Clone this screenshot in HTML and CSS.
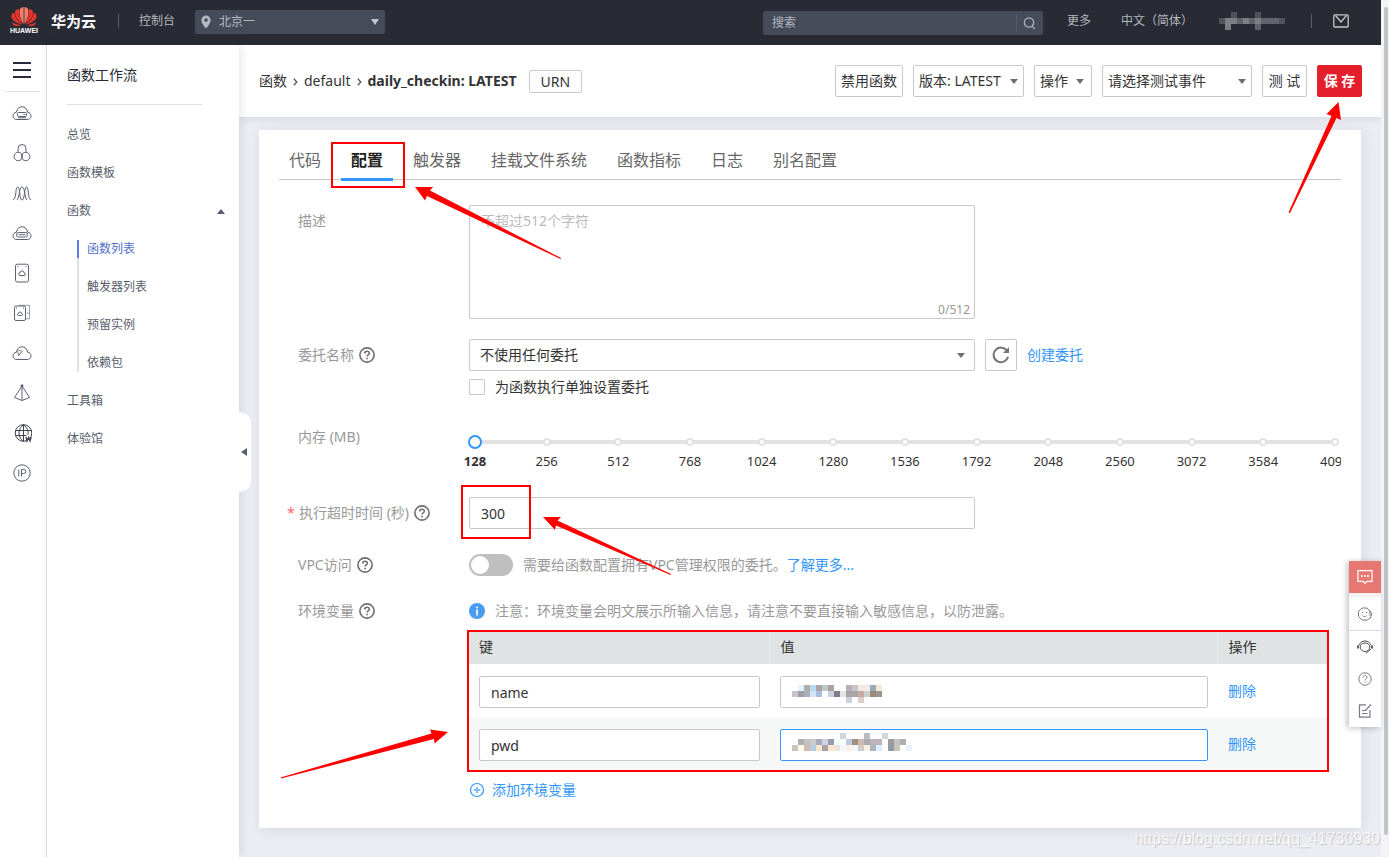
FILE: index.html
```html
<!DOCTYPE html>
<html lang="zh-CN">
<head>
<meta charset="utf-8">
<title>函数工作流 - 华为云</title>
<link rel="stylesheet" href="styles.css">
</head>
<body>
<svg class="defs" aria-hidden="true">
  <symbol id="help" viewBox="0 0 16 16"><circle cx="8" cy="8" r="7.1" fill="none" stroke="#6e6e6e" stroke-width="1.6"/><path d="M5.7 6.5C5.7 5 6.7 4.2 8 4.2s2.3.8 2.3 2.1c0 1.6-2.2 1.7-2.2 3.3" fill="none" stroke="#6e6e6e" stroke-width="1.5"/><path d="M7.2 10.7h1.7v1.6H7.2z" fill="#6e6e6e"/></symbol>
  <symbol id="cloud" viewBox="0 0 20 20"><path d="M5 16.5C2.500 16.500 1 15 1 12.800 1 11 2.300 9.300 4.500 9.200 5 5.800 7 3.800 10 3.800s5 2 5.500 5.400c2.200.1 3.500 1.800 3.500 3.600 0 2.200-1.500 3.700-4 3.700z"/></symbol>
</svg>
<div class="window">
  <div class="app">
    <header class="header">
      <a class="brand" href="#">
        <span class="logo">
          <svg width="26" height="20" viewBox="0 0 26 20">
            <g id="petals" fill="#e8332c">
              <path fill="#f0806a" d="M12.600 17C9.500 12.500 8 6.500 8.700 3 9.100 1 10.800.1 12.600.1z"/>
              <path d="M11.900 17.200C6.500 13.500 3.400 8.500 4 5 4.300 3.200 6 2 8 2 7.700 7.500 9.500 13 11.900 17.200z"/>
              <path d="M11.200 17.600C5 16.300.9 12.800.3 9.800.1 8 1.100 6.300 3.100 5.400 4 10.500 7.200 14.700 11.200 17.600z"/>
              <path d="M10.600 18.100c-3.400 1.300-6.400 1.300-7.900.2-1-.8-1.500-1.700-1.700-3.100C3.800 16.900 7 17.800 10.600 18.100z"/>
            </g>
            <use href="#petals" transform="translate(26 0) scale(-1 1)"/>
          </svg>
          <span class="logo-word">HUAWEI</span>
        </span>
        <strong class="brand-name">华为云</strong>
      </a>
      <span class="divider"></span>
      <a class="console" href="#">控制台</a>
      <div class="region">
        <svg width="10" height="14" viewBox="0 0 10 14"><path fill="#b4b7bf" fill-rule="evenodd" d="M5 .5a4.700 4.700 0 0 1 4.700 4.700C9.700 8.500 5 13.500 5 13.500S.3 8.500.3 5.200A4.700 4.700 0 0 1 5 .5zm0 2.800a1.800 1.800 0 1 0 0 3.600 1.800 1.800 0 0 0 0-3.600z"/></svg>
        <select aria-label="区域"><option>北京一</option></select>
      </div>
      <form class="search">
        <input type="text" placeholder="搜索" aria-label="搜索">
        <button type="button" aria-label="搜索"><svg width="13" height="13" viewBox="0 0 13 13" fill="none" stroke="#b4b7bf" stroke-width="1.200"><circle cx="6" cy="5.500" r="4.700"/><path d="M9 9.200l3 3"/></svg></button>
      </form>
      <a class="more" href="#">更多</a>
      <a class="lang" href="#">中文（简体）</a>
      <svg class="account" width="66" height="18" viewBox="0 0 66 18"><path fill="#50535b" d="M0 6h6v6H0zM12 0h6v6h-6zM36 0h6v6h-6zM60 6h6v6h-6z"/><path fill="#7c7f86" d="M6 6h6v12H6zM12 6h6v6h-6zM24 6h6v6h-6zM36 6h6v6h-6z"/><path fill="#61646c" d="M18 6h6v6h-6zM30 6h6v6h-6zM36 12h6v6h-6zM42 6h18v6H42z"/></svg>
      <span class="divider"></span>
      <button class="mail" type="button" aria-label="消息"><svg width="16" height="14" viewBox="0 0 16 14" fill="none" stroke="#c4c6cc" stroke-width="1.300"><rect x=".8" y=".8" width="14.400" height="12.200" rx="1"/><path d="M2.500 1.500L8 8l5.500-6.500"/></svg></button>
    </header>

    <div class="body">
      <nav class="rail" aria-label="服务">
        <button class="menu" type="button" aria-label="菜单"><span></span><span></span><span></span></button>
        <ul>
          <li><svg viewBox="0 0 20 20"><use href="#cloud"/><rect x="5.500" y="9.500" width="9" height="4" rx="1"/><path d="M11.500 11.500h1.500M6 14.800h8"/></svg></li>
          <li><svg viewBox="0 0 20 20"><circle cx="6.300" cy="13.500" r="4.200"/><circle cx="13.700" cy="13.500" r="4.200"/><path d="M6 9.300V5.500a4 4 0 0 1 8 0v3.800M10 11v2"/></svg></li>
          <li><svg viewBox="0 0 20 20"><path d="M1 17c4-2 2-13 4.700-13S7 17 10 17s2-13 4.500-13S15.500 16 19 17M5 17C7.500 15 7 4 10 4s2.500 11 5 13"/></svg></li>
          <li><svg viewBox="0 0 20 20"><use href="#cloud"/><rect x="4.500" y="9.500" width="11" height="4.500" rx="2"/><path d="M6.500 11.700h7"/></svg></li>
          <li><svg viewBox="0 0 20 20"><rect x="3.500" y="1.200" width="13" height="17.800" rx="1.800"/><path d="M5.500 3.500h1M13.500 3.500h1M8 12.500a1.300 1.300 0 0 1 0-2.600 2 2 0 0 1 4 0 1.300 1.300 0 0 1 0 2.600z"/></svg></li>
          <li><svg viewBox="0 0 20 20"><rect x="2.500" y="3" width="11" height="14.500" rx="1.500"/><path stroke-opacity=".6" d="M7 2.300h10.500v13.500H14M16 9v2"/><path d="M4 5h1M11 5h1M6.500 12.500a1 1 0 0 1 0-2 1.500 1.500 0 0 1 3 0 1 1 0 0 1 0 2z"/></svg></li>
          <li><svg viewBox="0 0 20 20"><use href="#cloud"/><path stroke-opacity=".7" d="M5.500 7.500l1.200 5L10.500 8l-4-.5M6.700 12.500l2-3"/></svg></li>
          <li><svg viewBox="0 0 20 20"><path d="M10 3L2.500 14.500 10 17.500l7.500-3zM10 3v14.500"/><circle cx="10" cy="2.800" r="1" fill="#3d4152"/></svg></li>
          <li><svg class="dark" viewBox="0 0 20 20"><circle cx="11.500" cy="10" r="8.300"/><path d="M11.500 1.700v16.600M3.500 7.500h16M3.500 12.500h11M11.500 1.700c-6 4-6 12.600 0 16.600M11.500 1.700c4 3 5 7 4.500 10"/><path stroke-width="1.300" d="M14 14l1 4 1.500-3.500L18 18l1.200-4"/></svg></li>
          <li><svg viewBox="0 0 20 20"><circle cx="10" cy="10" r="8.200"/><path d="M6.800 6.500v7M9.500 13.500v-7h2.300a2 2 0 0 1 0 4H9.500"/></svg></li>
        </ul>
      </nav>

      <nav class="side" aria-label="函数工作流">
        <h2>函数工作流</h2>
        <ul>
          <li><a href="#">总览</a></li>
          <li><a href="#">函数模板</a></li>
          <li><a class="open" href="#">函数</a>
            <ul class="sub">
              <li class="current"><a href="#">函数列表</a></li>
              <li><a href="#">触发器列表</a></li>
              <li><a href="#">预留实例</a></li>
              <li><a href="#">依赖包</a></li>
            </ul>
          </li>
          <li><a href="#">工具箱</a></li>
          <li><a href="#">体验馆</a></li>
        </ul>
        <button class="collapse" type="button" aria-label="收起"></button>
      </nav>

      <main class="main">
        <div class="topbar">
          <div class="crumbs">
            <a href="#">函数</a><svg width="5" height="8" viewBox="0 0 5 8"><path d="M.8.800l3 3.200-3 3.200"/></svg><a href="#">default</a><svg width="5" height="8" viewBox="0 0 5 8"><path d="M.8.800l3 3.200-3 3.200"/></svg><strong>daily_checkin: LATEST</strong>
            <button class="urn" type="button">URN</button>
          </div>
          <div class="actions">
            <button class="btn" type="button">禁用函数</button>
            <div class="drop version"><select aria-label="版本"><option>版本: LATEST</option></select></div>
            <button class="btn ops" type="button">操作</button>
            <div class="drop event"><select aria-label="测试事件"><option>请选择测试事件</option></select></div>
            <button class="btn short" type="button">测 试</button>
            <button class="btn short save" type="button">保 存</button>
          </div>
        </div>

        <section class="card">
          <ul class="tabs">
            <li><a href="#">代码</a></li>
            <li class="active"><a href="#">配置</a><span class="mark mark-tab"></span></li>
            <li><a href="#">触发器</a></li>
            <li><a href="#">挂载文件系统</a></li>
            <li><a href="#">函数指标</a></li>
            <li><a href="#">日志</a></li>
            <li><a href="#">别名配置</a></li>
          </ul>

          <form class="form">
            <div class="field">
              <label for="desc">描述</label>
              <div class="area">
                <textarea id="desc" placeholder="不超过512个字符"></textarea>
                <span class="count">0/512</span>
              </div>
            </div>

            <div class="field agency">
              <label for="agency">委托名称<svg class="help"><use href="#help"/></svg></label>
              <div>
                <div class="line">
                  <div class="drop wide"><select id="agency"><option>不使用任何委托</option></select></div>
                  <button class="refresh" type="button" aria-label="刷新"><svg width="18" height="18" viewBox="0 0 18 18"><path d="M15.300 5.300A7.300 7.300 0 1 0 16 10.800" fill="none" stroke="#757575" stroke-width="2"/><path fill="#757575" d="M17 1v6h-6z"/></svg></button>
                  <a class="link" href="#">创建委托</a>
                </div>
                <div class="check"><input id="own" type="checkbox"><label for="own">为函数执行单独设置委托</label></div>
              </div>
            </div>

            <div class="field memory">
              <label for="mem">内存 (MB)</label>
              <div class="slider">
                <div class="ticks"><i></i><i></i><i></i><i></i><i></i><i></i><i></i><i></i><i></i><i></i><i></i><i></i><i></i></div>
                <input id="mem" type="range" min="0" max="12" value="0">
                <div class="scale"><b>128</b><span>256</span><span>512</span><span>768</span><span>1024</span><span>1280</span><span>1536</span><span>1792</span><span>2048</span><span>2560</span><span>3072</span><span>3584</span><span>4096</span></div>
              </div>
            </div>

            <div class="field timeout">
              <label class="required" for="timeout">执行超时时间 (秒)<svg class="help"><use href="#help"/></svg></label>
              <div class="box">
                <input id="timeout" class="text" type="text" value="300">
                <span class="mark mark-timeout"></span>
              </div>
            </div>

            <div class="field vpc">
              <label for="vpc">VPC访问<svg class="help"><use href="#help"/></svg></label>
              <div class="line">
                <input id="vpc" class="switch" type="checkbox">
                <p class="note">需要给函数配置拥有VPC管理权限的委托。<a class="link" href="#">了解更多...</a></p>
              </div>
            </div>

            <div class="field env">
              <span class="name">环境变量<svg class="help"><use href="#help"/></svg></span>
              <div>
                <p class="note info"><svg width="16" height="16" viewBox="0 0 16 16"><circle cx="8" cy="8" r="8" fill="#4a9cf0"/><path fill="#fff" d="M7.200 3.500h1.700v1.700H7.200zM7.200 6.500h1.700v6H7.200z"/></svg>注意：环境变量会明文展示所输入信息，请注意不要直接输入敏感信息，以防泄露。</p>
                <div class="vars">
                  <table>
                    <thead><tr><th class="key">键</th><th>值</th><th class="op">操作</th></tr></thead>
                    <tbody>
                      <tr>
                        <td><input class="text" type="text" value="name" aria-label="键"></td>
                        <td><div class="box"><input class="text" type="text" aria-label="值">
                          <svg class="mosaic" width="120" height="18" viewBox="0 0 20 3" shape-rendering="crispEdges" stroke-width="1" fill="none">
                            <path stroke="#def4ff" d="M1 .5h1"/><path stroke="#b0aea9" d="M2 .5h1"/><path stroke="#b8d8f0" d="M3 .5h1"/><path stroke="#aba4a0" d="M4 .5h1M6 .5h1"/><path stroke="#bfc8ca" d="M5 .5h1"/><path stroke="#b6b2bb" d="M9 .5h1"/><path stroke="#c8c4c0" d="M10 .5h1"/><path stroke="#f3e9e4" d="M11 .5h2"/><path stroke="#9aa8b8" d="M13 .5h1"/><path stroke="#f1e9d2" d="M14 .5h1"/>
                            <path stroke="#c9c3cb" d="M0 1.500h1"/><path stroke="#a09faa" d="M1 1.500h1"/><path stroke="#aeadbb" d="M2 1.500h1"/><path stroke="#cfe6f8" d="M3 1.500h1"/><path stroke="#a8bedb" d="M4 1.500h1"/><path stroke="#cbd2df" d="M6 1.500h1M9 2.500h1"/><path stroke="#827d88" d="M7 1.500h1"/><path stroke="#e4e6e4" d="M8 1.500h1"/><path stroke="#aaa3a8" d="M9 1.500h2"/><path stroke="#c8aa9e" d="M11 1.500h1"/><path stroke="#c5d3cb" d="M12 1.500h1"/><path stroke="#9e887d" d="M13 1.500h1"/><path stroke="#9c9593" d="M14 1.500h1"/><path stroke="#d9d0cc" d="M11 2.500h1"/>
                          </svg></div></td>
                        <td class="op"><a class="link" href="#">删除</a></td>
                      </tr>
                      <tr>
                        <td><input class="text" type="text" value="pwd" aria-label="键"></td>
                        <td><div class="box"><input class="text focused" type="text" aria-label="值">
                          <svg class="mosaic high" width="120" height="18" viewBox="0 0 20 3" shape-rendering="crispEdges" stroke-width="1" fill="none">
                            <path stroke="#ced7de" d="M8 .5h1M15 .5h1"/><path stroke="#bcbcc3" d="M12 .5h1"/>
                            <path stroke="#b0b0ad" d="M1 1.500h1M18 1.500h1"/><path stroke="#c5c1c7" d="M2 1.500h1M17 1.500h1"/><path stroke="#cdcbc5" d="M3 1.500h1"/><path stroke="#a5abb9" d="M4 1.500h1"/><path stroke="#ccd5e2" d="M5 1.500h1"/><path stroke="#9c9aad" d="M6 1.500h1"/><path stroke="#f0ffff" d="M7 1.500h1"/><path stroke="#b8c9e4" d="M9 1.500h1"/><path stroke="#a78e78" d="M10 1.500h1"/><path stroke="#cbbcb4" d="M11 1.500h1"/><path stroke="#aaabad" d="M12 1.500h1"/><path stroke="#bdb3ba" d="M13 1.500h2"/><path stroke="#9b9d98" d="M16 1.500h1"/>
                            <path stroke="#cac4bb" d="M0 2.500h1M17 2.500h1"/><path stroke="#fffdf0" d="M1 2.500h1"/><path stroke="#d8b8aa" d="M2 2.500h1"/><path stroke="#b2cfe4" d="M3 2.500h1"/><path stroke="#fce5cd" d="M4 2.500h1M6 2.500h1"/><path stroke="#a8a2ac" d="M5 2.500h1"/><path stroke="#ece3df" d="M7 2.500h1"/><path stroke="#eff7ff" d="M8 2.500h1M10 2.500h1"/><path stroke="#f9efe3" d="M9 2.500h1M12 2.500h1"/><path stroke="#d4ccc6" d="M11 2.500h1"/><path stroke="#adb4bb" d="M13 2.500h1"/><path stroke="#dcefff" d="M14 2.500h1"/><path stroke="#919ba5" d="M16 2.500h1"/><path stroke="#e8f3fa" d="M19 2.500h1"/>
                          </svg></div></td>
                        <td class="op"><a class="link" href="#">删除</a></td>
                      </tr>
                    </tbody>
                  </table>
                  <span class="mark mark-vars"></span>
                </div>
                <button class="add" type="button"><svg width="16" height="16" viewBox="0 0 16 16" fill="none" stroke="#3296fa"><circle cx="8" cy="8" r="6.500" stroke-width="1.200"/><path stroke="#7fbdfb" stroke-width="2" d="M8 4.700v6.600M4.700 8h6.600"/></svg>添加环境变量</button>
              </div>
            </div>
          </form>
        </section>
      </main>
    </div>
  </div>
  <div class="scrollbar"><span></span></div>
</div>

<aside class="dock">
  <button class="feedback" type="button" aria-label="反馈"><svg width="16" height="16" viewBox="0 0 16 16" fill="none" stroke="#fff" stroke-width="1.200"><path d="M1 1.700h14v10.600H10L8 14.300 6 12.300H1z"/><path stroke-width="1.500" d="M4 7h2M7 7h2M10 7h2"/></svg></button>
  <div class="tools">
    <button type="button" aria-label="智能客服"><svg width="16" height="16" viewBox="0 0 16 16" fill="none" stroke="#777b86"><path d="M12 12.700L10.500 14H5L1.500 10.500v-5L5 2h5l3 3v5M12 12.700h1L15 8l-2-3"/><path d="M5.500 9.500c1 1.500 3 1.500 4 0M5 6.500h1.200M9 6.500h1.200"/></svg></button>
    <button type="button" aria-label="在线客服"><svg width="16" height="16" viewBox="0 0 16 16" fill="none" stroke="#4c4f58"><path d="M1.800 6.500C3 3.500 5.200 2 8 2s5 1.500 6.200 4.500M3.200 8C3.200 5.500 5.500 4 8 4s4.800 1.500 4.800 4-2.300 4.500-4.800 4.500S3.200 10.500 3.200 8z"/><path stroke-width="1.800" d="M1 6.500v3M15 6.500v3"/><path d="M14 10L9 14.300"/></svg></button>
    <button type="button" aria-label="帮助"><svg width="16" height="16" viewBox="0 0 16 16" fill="none" stroke="#777b86"><circle cx="8" cy="8" r="6.200"/><path d="M6 6.500C6 5.200 7 4.600 8 4.600s2 .6 2 1.800S8 8 8 9.500M8 10.700v1.100"/></svg></button>
    <button type="button" aria-label="建议"><svg width="16" height="16" viewBox="0 0 16 16" fill="none" stroke="#777b86" stroke-width="1.200"><path d="M9 1.800H2.500v12.400h10.500V7M14 1.500L8.500 7.500H5M5 10.500h5.500"/></svg></button>
  </div>
</aside>

<svg class="arrows" width="1389" height="857" viewBox="0 0 1389 857" aria-hidden="true">
  <path d="M415 187L433 187 430 190.500 561 258 560.500 259 427 196 425 200.500z"/>
  <path d="M1338.500 102L1341 120 1336.500 118 1290 213 1288.500 212.500 1331.500 116 1326.500 114z"/>
  <path d="M543 517L561 517 557.500 520.500 671 574 670.500 575 556 525.500 555 530z"/>
  <path d="M448 732L434.500 743.500 434 739 281 778.500 280.500 777.500 431.500 733.500 430 729.500z"/>
</svg>
<div class="watermark">https://blog.csdn.net/qq_41730930</div>
</body>
</html>
```
FILE: styles.css
```css
* { box-sizing: border-box; }
body {
  position: relative;
  margin: 0;
  min-height: 100vh;
  overflow: hidden;
  background: #fff;
  color: #333;
  font: 14px/24px "Noto Sans", "Noto Sans CJK SC", sans-serif;
}
ul { margin: 0; padding: 0; list-style: none; }
p { margin: 0; }
a { color: inherit; text-decoration: none; }
button, input, select, textarea { margin: 0; color: inherit; font: inherit; }
button { padding: 0; border: 0; background: none; white-space: nowrap; }
svg { flex: none; }
.defs { display: none; }

.window { display: flex; min-height: 100vh; }
.app { display: flex; flex: 1; flex-direction: column; min-width: 0; }
.scrollbar { display: flex; width: 8px; padding: 7px 1px 22px 3px; background: #f3f4f8; }
.scrollbar span { flex: 1; border-radius: 2px; background: #c0c4c7; }

/* header */
.header {
  display: flex;
  align-items: center;
  height: 45px;
  padding: 0 32px 3px 11px;
  background: #282b33;
  color: #b4b7bf;
  font-size: 12px;
}
.brand { display: flex; align-items: center; gap: 14px; width: 107px; color: #fff; }
.logo { display: flex; flex-direction: column; align-items: center; width: 26px; }
.logo-word { font: bold 7px/8px "Liberation Sans", sans-serif; }
.brand-name { font-size: 15px; }
.divider { width: 1px; height: 14px; background: #5c606b; }
.console { margin: 0 20px; }
.region {
  display: flex;
  position: relative;
  align-items: center;
  width: 190px;
  height: 24px;
  margin-top: 2px;
  padding-left: 6px;
  border-radius: 2px;
  background: #464b59;
}
.region select { flex: 1; padding: 0 0 0 8px; border: 0; background: none; appearance: none; }
.region::after { position: absolute; right: 6px; border: 4px solid transparent; border-top: 6px solid #c4c6cc; border-bottom: 0; content: ""; }
.search { display: flex; width: 280px; height: 24px; margin: 4px 24px 0 auto; border-radius: 2px; background: #464b59; }
.search input { flex: 1; min-width: 0; padding: 0 9px; border: 0; background: none; }
.search input::placeholder { color: #b4b7bf; }
.search button { display: flex; align-items: center; justify-content: center; width: 27px; margin: 3px 0; border-left: 1px solid #525a78; }
.lang { margin: 0 26px 0 30px; }
.account { margin-right: 26px; }
.mail { display: flex; margin-left: 21px; }

/* frame */
.body { display: flex; flex: 1; }
.rail { width: 47px; border-right: 1px solid #dfe1e8; }
.menu { display: flex; flex-direction: column; justify-content: center; gap: 5px; width: 35px; height: 47px; margin: 0 0 1px 5px; padding: 4px 9px 0 8px; border-bottom: 1px solid #dfe1e8; }
.menu span { height: 2px; background: #252b3a; }
.rail li { display: flex; justify-content: center; align-items: center; height: 40px; padding-right: 2px; }
.rail svg { width: 20px; height: 20px; fill: none; stroke: #5d6172; stroke-width: 1; }
.rail svg.dark { stroke: #3d4152; }

.side { position: relative; z-index: 2; width: 192px; padding: 18px 14px 0 20px; background: #fff; box-shadow: 2px 0 8px rgba(40, 50, 80, .12); color: #575d6c; font-size: 12px; }
.side h2 { margin: 0 22px 11px 0; padding-bottom: 17px; border-bottom: 1px solid #dfe1e8; color: #252b3a; font-size: 14px; font-weight: 400; }
.side a { display: block; line-height: 38px; }
.side .open { display: flex; justify-content: space-between; align-items: center; }
.side .open::after { border: 4px solid transparent; border-top: 0; border-bottom: 5px solid #575d6c; content: ""; }
.sub { margin-left: 10px; padding: 10px 0; }
.sub li { padding-left: 8px; border-left: 2px solid #dfe1e8; }
.sub a { padding-bottom: 20px; line-height: 18px; }
.sub li:last-child a { padding-bottom: 0; }
.sub .current { position: relative; color: #526ecc; }
.sub .current::before { position: absolute; left: -2px; width: 2px; height: 18px; background: #5e7ce0; content: ""; }
.collapse { position: absolute; top: 367px; right: -12px; width: 12px; height: 80px; border-radius: 0 12px 12px 0; background: #fff; }
.collapse::after { display: block; width: 0; margin-left: 2px; border: 4px solid transparent; border-right: 6px solid #575d6c; border-left: 0; content: ""; }

.main { flex: 1; min-width: 0; background: #ecedf3; }
.topbar { display: flex; justify-content: space-between; align-items: center; height: 72px; padding: 0 19px 0 20px; background: #fff; box-shadow: 0 2px 8px rgba(40, 50, 80, .1); }
.crumbs { display: flex; align-items: center; gap: 6px; }
.crumbs svg { margin: 2px 0 0; fill: none; stroke: #555; stroke-width: 1.3; }
.urn { height: 23px; margin-left: 6px; padding: 0 11px; border: 1px solid #c9c9c9; border-radius: 2px; line-height: 21px; }
.actions { display: flex; gap: 10px; }
.btn { height: 32px; padding: 0 5px; border: 1px solid #c9c9c9; border-radius: 2px; background: #fff; }
.short { min-width: 45px; }
.ops { display: flex; align-items: center; gap: 8px; padding-right: 7px; }
.drop { position: relative; }
.drop select { width: 100%; height: 32px; padding: 0 5px; border: 1px solid #c9c9c9; border-radius: 2px; background: #fff; appearance: none; }
.drop::after { position: absolute; top: 14px; right: 6px; border: 4px solid transparent; border-top: 5px solid #6e6e6e; border-bottom: 0; content: ""; }
.ops::after { border: 4px solid transparent; border-top: 5px solid #6e6e6e; border-bottom: 0; content: ""; }
.version { width: 111px; }
.event { width: 150px; }
.save { border-color: #e41e2b; background: #e41e2b; color: #fff; font-weight: 700; }

/* card */
.card { margin: 13px 20px 29px; padding: 0 20px 26px; background: #fff; box-shadow: 2px 2px 12px rgba(40, 50, 80, .1); }
.tabs { display: flex; gap: 10px; height: 50px; border-bottom: 1px solid #c9c9c9; color: #666; font-size: 16px; }
.tabs li { position: relative; padding: 18px 10px 0; }
.tabs .active { color: #222; font-weight: 700; }
.tabs .active::after { position: absolute; right: 0; bottom: -2px; left: 0; height: 3px; background: #3296fa; content: ""; }
.form { padding: 25px 0 0 18px; }
.field { display: grid; grid-template-columns: 171px minmax(0, 1fr); }
.form { padding-left: 19px; }
.field > label, .name { display: flex; align-items: center; gap: 5px; height: 32px; color: #999; }
.help { width: 16px; height: 16px; }
.area { position: relative; width: 506px; max-width: 100%; height: 114px; }
.area textarea { width: 100%; height: 100%; padding: 3px 11px; border: 1px solid #c9c9c9; border-radius: 2px; resize: none; }
.area textarea::placeholder { color: #bbb; }
.count { position: absolute; right: 5px; bottom: 1px; color: #999; font-size: 12px; line-height: 16px; }
.agency { margin-top: 20px; }
.line { display: flex; align-items: center; gap: 10px; }
.wide { width: 506px; }
.wide select { padding: 0 10px; }
.wide::after { right: 10px; }
.refresh { display: flex; align-items: center; justify-content: center; width: 32px; height: 32px; border: 1px solid #c9c9c9; border-radius: 2px; }
.link { color: #3296fa; }
.check { display: flex; align-items: center; gap: 10px; height: 16px; margin-top: 8px; }
.check input { width: 16px; height: 16px; border: 1px solid #c9c9c9; border-radius: 1px; appearance: none; }

.memory { margin-top: 30px; }
.memory > label { height: 24px; }
.slider { position: relative; margin-left: -9px; padding: 9px 0 0 8px; overflow: hidden; }
.slider input { display: block; position: relative; width: calc(100% + 1px); height: 16px; background: none; appearance: none; }
.slider input::-webkit-slider-thumb { width: 14px; height: 14px; border: 2px solid #3296fa; border-radius: 50%; background: #fff; appearance: none; }
.ticks { display: flex; position: absolute; top: 15px; right: 6px; left: 15px; justify-content: space-between; height: 4px; background: #e2e2e2; }
.ticks i { width: 8px; height: 8px; margin: -2px -4px 0; border: 2px solid #e2e2e2; border-radius: 50%; background: #fff; }
.scale { display: flex; justify-content: space-between; margin: 3px 6px 0 7px; font-size: 13px; line-height: 16px; }
.scale > * { display: flex; justify-content: center; width: 0; }

.timeout { margin-top: 28px; }
.field > .required { margin-left: -11px; }
.required::before { width: 7px; color: #f66; content: "*"; }
.box { position: relative; }
.timeout .box { width: 506px; max-width: 100%; }
.text { display: block; width: 100%; height: 32px; padding: 0 11px; border: 1px solid #c9c9c9; border-radius: 2px; background: #fff; }
.text.focused { border-color: #3296fa; }
.vpc { margin-top: 24px; }
.vpc > label, .env > .name { height: 24px; }
.switch { display: flex; align-items: center; width: 44px; height: 22px; border-radius: 11px; background: #bfbfbf; appearance: none; }
.switch::before { width: 18px; height: 18px; margin-left: 2px; border-radius: 50%; background: #fff; content: ""; }
.note { color: #999; }
.env { margin-top: 22px; }
.info { display: flex; align-items: center; gap: 10px; }

.vars { position: relative; max-width: 858px; margin-top: 9px; }
.vars table { width: 100%; border-collapse: collapse; table-layout: fixed; }
.vars th { height: 32px; padding: 0 10px 2px; background: #dfe3e4; font-weight: 400; text-align: left; }
.vars th + th { border-left: 1px solid #e8e9ea; }
.vars .key { width: 301px; }
.vars .op { width: 109px; }
.vars td { height: 53px; padding: 12px 10px 9px; }
.vars td.op { padding: 10px; }
.vars tr:nth-child(2) td { background: #f5f8f7; }
.mosaic { position: absolute; top: 9px; left: 12px; }
.mosaic.high { top: 4px; }
.add { display: flex; align-items: center; gap: 7px; margin-top: 8px; color: #3296fa; }

/* callouts */
.mark { position: absolute; border: 2px solid #f00; }
.mark-tab { top: 12px; right: -12px; bottom: -9px; left: -10px; z-index: 1; }
.mark-timeout { top: -12px; bottom: -10px; left: -8px; width: 70px; }
.mark-vars { inset: -2px; }
.arrows { position: absolute; top: 0; left: 0; z-index: 4; fill: #f00; pointer-events: none; }
.watermark { position: absolute; right: 9px; bottom: 6px; color: #fff; font: 16px/24px "Liberation Sans", sans-serif; text-shadow: 1px 1px 1px #aaa; opacity: .6; }

/* floating tools */
.dock { display: flex; position: absolute; top: 561px; right: 8px; z-index: 3; flex-direction: column; gap: 4px; width: 32px; box-shadow: -2px 1px 6px rgba(0, 0, 0, .25); background: #f2f2f2; }
.dock button { display: flex; align-items: center; justify-content: center; width: 100%; height: 32px; }
.dock .feedback { background: #e67871; }
.tools { background: #fff; }
.tools button:first-child { height: 34px; border-bottom: 1px solid #d9d9d9; }
```
